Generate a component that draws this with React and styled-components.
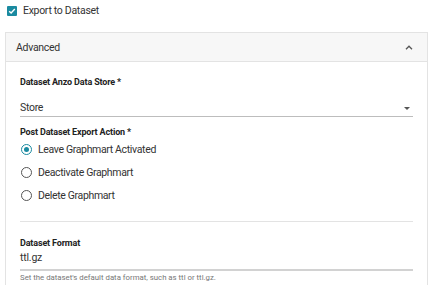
import React from "react";
import styled, { createGlobalStyle } from "styled-components";

const Global = createGlobalStyle`
  body {
    margin: 0;
    background: #fff;
    font-family: Roboto, "Liberation Sans", sans-serif;
    color: #333;
  }
`;

const Page = styled.div`
  width: 435px;
  height: 285px;
  overflow: hidden;
`;

const CheckRow = styled.label`
  display: flex;
  align-items: center;
  gap: 6px;
  height: 21px;
  padding: 0 0 0 7px;
  font-size: 10.5px;
  letter-spacing: -0.3px;
  color: #333;
`;

const CheckBox = styled.span`
  width: 10px;
  height: 10px;
  border-radius: 1px;
  background: #1a8aa0;
  display: flex;
  align-items: center;
  justify-content: center;
`;

const Panel = styled.section`
  margin: 11px 0 0 5px;
  width: 421px;
  border: 1px solid #e3e3e3;
  border-bottom: none;
`;

const PanelHeader = styled.div`
  display: flex;
  align-items: center;
  justify-content: space-between;
  height: 28px;
  padding: 0 14px 0 10px;
  background: #f7f7f7;
  border-bottom: 1px solid #e3e3e3;
  font-size: 10.5px;
  letter-spacing: -0.3px;
  color: #333;
`;

const PanelBody = styled.div`
  padding: 0 14px 20px 14px;
`;

const Label = styled.div`
  font-size: 9px;
  font-weight: 700;
  letter-spacing: -0.15px;
  line-height: 14px;
  color: #222;
  margin-top: ${(p) => p.$top}px;
`;

const Select = styled.div`
  display: flex;
  align-items: center;
  justify-content: space-between;
  padding: 11px 3px 0 0;
  line-height: 16px;
  font-size: 10.5px;
  letter-spacing: -0.3px;
  color: #333;
  border-bottom: 1px solid #bdbdbd;
`;

const Caret = styled.span`
  width: 0;
  height: 0;
  border-left: 3.5px solid transparent;
  border-right: 3.5px solid transparent;
  border-top: 3.5px solid #555;
`;

const RadioGroup = styled.div`
  margin-top: -1px;
`;

const RadioRow = styled.div`
  display: flex;
  align-items: center;
  gap: 6px;
  height: 23px;
  padding-left: 1px;
  font-size: 10.5px;
  letter-spacing: -0.35px;
  color: #333;
`;

const RadioCircle = styled.span`
  box-sizing: border-box;
  width: 11px;
  height: 11px;
  border-radius: 50%;
  border: 1.2px solid ${(p) => (p.$on ? "#1a8aa0" : "#555")};
  display: flex;
  align-items: center;
  justify-content: center;
  &::after {
    content: "";
    display: ${(p) => (p.$on ? "block" : "none")};
    width: 5px;
    height: 5px;
    border-radius: 50%;
    background: #1a8aa0;
  }
`;

const Divider = styled.hr`
  border: none;
  border-top: 1px solid #e3e3e3;
  margin: 14px 0 0 0;
`;

const Input = styled.div`
  font-size: 10.5px;
  letter-spacing: -0.2px;
  line-height: 16px;
  padding-bottom: 3px;
  color: #333;
  border-bottom: 2px solid #d2d2d2;
`;

const Helper = styled.div`
  font-size: 7.8px;
  line-height: 11px;
  padding-top: 1px;
  color: #777;
`;

const radios = [
  { label: "Leave Graphmart Activated", on: true },
  { label: "Deactivate Graphmart", on: false },
  { label: "Delete Graphmart", on: false },
];

const App = () => {
  return (
    <Page>
      <Global />
      <CheckRow>
        <CheckBox>
          <svg width="8" height="8" viewBox="0 0 8 8">
            <path d="M1.2 4.2 L3.1 6 L6.8 2" stroke="#fff" strokeWidth="1.4" fill="none" />
          </svg>
        </CheckBox>
        Export to Dataset
      </CheckRow>

      <Panel>
        <PanelHeader>
          <span>Advanced</span>
          <svg width="8" height="5" viewBox="0 0 8 5">
            <path d="M1 4.2 L4 1.2 L7 4.2" stroke="#555" strokeWidth="1.3" fill="none" />
          </svg>
        </PanelHeader>
        <PanelBody>
          <Label $top={13}>Dataset Anzo Data Store *</Label>
          <Select>
            <span>Store</span>
            <Caret />
          </Select>

          <Label $top={8}>Post Dataset Export Action *</Label>
          <RadioGroup>
            {radios.map((r) => (
              <RadioRow key={r.label}>
                <RadioCircle $on={r.on} />
                {r.label}
              </RadioRow>
            ))}
          </RadioGroup>

          <Divider />

          <Label $top={14}>Dataset Format</Label>
          <Input>ttl.gz</Input>
          <Helper>Set the dataset's default data format, such as ttl or ttl.gz.</Helper>
        </PanelBody>
      </Panel>
    </Page>
  );
};

export default App;
